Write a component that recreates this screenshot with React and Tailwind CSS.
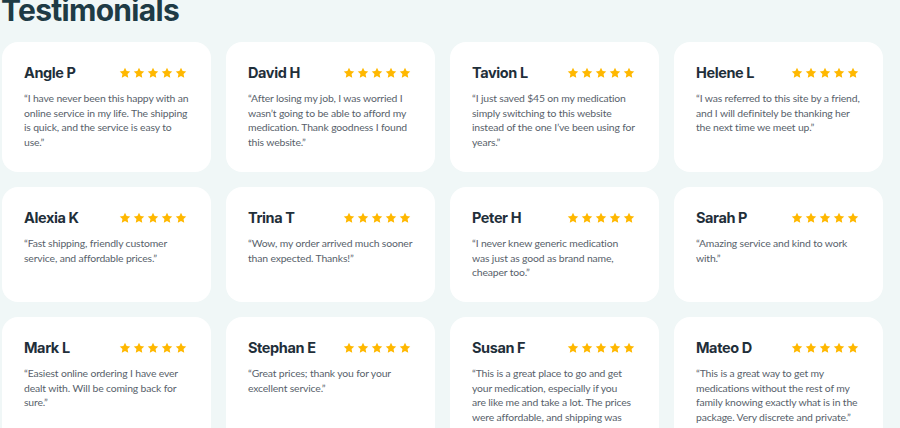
const reviews = [
  { name: 'Angle P', lines: ['“I have never been this happy with an', 'online service in my life. The shipping', 'is quick, and the service is easy to', 'use.”'] },
  { name: 'David H', lines: ['“After losing my job, I was worried I', 'wasn’t going to be able to afford my', 'medication. Thank goodness I found', 'this website.”'] },
  { name: 'Tavion L', lines: ['“I just saved $45 on my medication', 'simply switching to this website', 'instead of the one I’ve been using for', 'years.”'] },
  { name: 'Helene L', lines: ['“I was referred to this site by a friend,', 'and I will definitely be thanking her', 'the next time we meet up.”'] },
  { name: 'Alexia K', lines: ['“Fast shipping, friendly customer', 'service, and affordable prices.”'] },
  { name: 'Trina T', lines: ['“Wow, my order arrived much sooner', 'than expected. Thanks!”'] },
  { name: 'Peter H', lines: ['“I never knew generic medication', 'was just as good as brand name,', 'cheaper too.”'] },
  { name: 'Sarah P', lines: ['“Amazing service and kind to work', 'with.”'] },
  { name: 'Mark L', lines: ['“Easiest online ordering I have ever', 'dealt with. Will be coming back for', 'sure.”'] },
  { name: 'Stephan E', lines: ['“Great prices; thank you for your', 'excellent service.”'] },
  { name: 'Susan F', lines: ['“This is a great place to go and get', 'your medication, especially if you', 'are like me and take a lot. The prices', 'were affordable, and shipping was', 'fast.”'] },
  { name: 'Mateo D', lines: ['“This is a great way to get my', 'medications without the rest of my', 'family knowing exactly what is in the', 'package. Very discrete and private.”'] },
];

const Star = () => (
  <svg viewBox="0 0 24 24" className="w-[12px] h-[12px]" fill="#ffb800">
    <path d="M12 1.5l3.2 6.7 7.3.9-5.4 5.1 1.4 7.3L12 18l-6.5 3.5 1.4-7.3-5.4-5.1 7.3-.9z" />
  </svg>
);

const Card = ({ review }) => (
  <div className="bg-white rounded-[16px] px-[22px] pt-[22px] pb-[22px]">
    <div className="flex items-center justify-between pr-[2px]">
      <h3 className="text-[14.5px] font-bold text-[#1f2f3a] leading-[18px] tracking-[-0.4px]">{review.name}</h3>
      <div className="flex gap-[2px]">
        <Star /><Star /><Star /><Star /><Star />
      </div>
    </div>
    <p className="mt-[9px] text-[10.4px] leading-[14.7px] text-[#585f6b] tracking-[-0.15px]" style={{ fontFamily: 'Lato, "Noto Sans", sans-serif' }}>
      {review.lines.map((l, i) => (
        <span key={i} className="block whitespace-nowrap">{l}</span>
      ))}
    </p>
  </div>
);

const App = () => {
  return (
    <div className="w-[900px] h-[428px] overflow-hidden bg-[#f0f7f7]" style={{ fontFamily: 'Inter, "Noto Sans", sans-serif' }}>
      <h1 className="text-[30px] font-bold leading-none text-[#1e3b45] tracking-[-0.7px] mt-[-5px] ml-[1px]">Testimonials</h1>
      <div className="grid grid-cols-[repeat(4,209px)] gap-[15px] ml-[2px] mt-[17px]">
        {reviews.map(r => (
          <Card key={r.name} review={r} />
        ))}
      </div>
    </div>
  );
};

export default App;
